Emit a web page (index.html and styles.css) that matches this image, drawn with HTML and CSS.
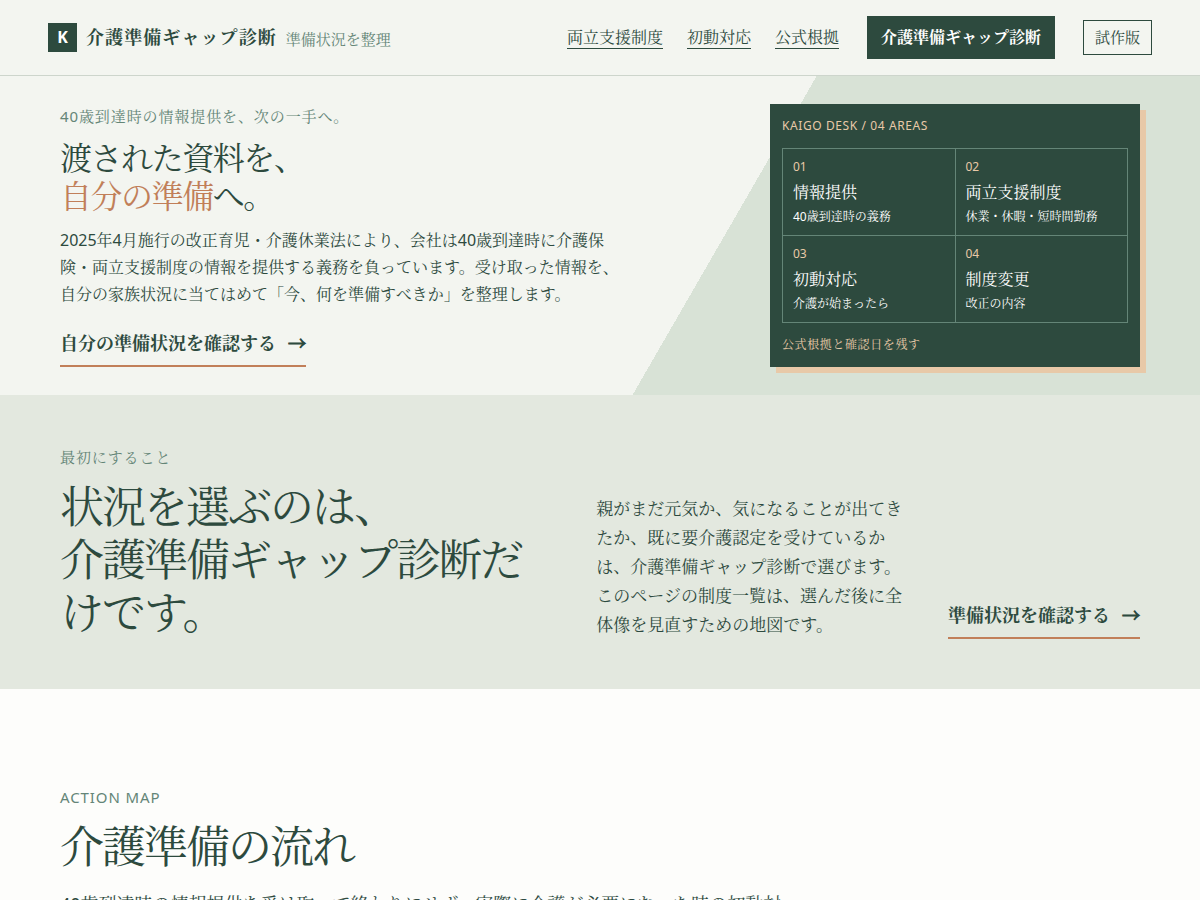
FILE: index.html
```
<!DOCTYPE html>
<html lang="ja">
<head>
    <meta charset="UTF-8">
    <meta name="viewport" content="width=device-width, initial-scale=1">
    <title>介護準備ギャップ診断</title>
    <link rel="stylesheet" href="styles.css">
</head>
<body>
    <header class="site-header">
        <div class="brand">
            <span class="brand-mark">K</span>
            <strong>介護準備ギャップ診断</strong>
            <small>準備状況を整理</small>
        </div>
        <nav class="site-nav">
            <div class="nav-links">
                <a href="#areas">両立支援制度</a>
                <a href="#start">初動対応</a>
                <a href="#map">公式根拠</a>
            </div>
            <a class="nav-cta" href="#start">介護準備ギャップ診断</a>
            <span class="badge">試作版</span>
        </nav>
    </header>

    <main>
        <section class="hero">
            <div class="hero-copy">
                <p class="eyebrow">40歳到達時の情報提供を、次の一手へ。</p>
                <h1>渡された資料を、<br><em>自分の準備</em>へ。</h1>
                <p class="lead">2025年4月施行の改正育児・介護休業法により、会社は40歳到達時に介護保険・両立支援制度の情報を提供する義務を負っています。受け取った情報を、自分の家族状況に当てはめて「今、何を準備すべきか」を整理します。</p>
                <a class="text-cta" href="#start">自分の準備状況を確認する<span>→</span></a>
            </div>

            <aside class="desk" id="areas">
                <p class="desk-label">KAIGO DESK / 04 AREAS</p>
                <div class="desk-grid">
                    <div class="desk-cell">
                        <span>01</span>
                        <b>情報提供</b>
                        <small>40歳到達時の義務</small>
                    </div>
                    <div class="desk-cell">
                        <span>02</span>
                        <b>両立支援制度</b>
                        <small>休業・休暇・短時間勤務</small>
                    </div>
                    <div class="desk-cell">
                        <span>03</span>
                        <b>初動対応</b>
                        <small>介護が始まったら</small>
                    </div>
                    <div class="desk-cell">
                        <span>04</span>
                        <b>制度変更</b>
                        <small>改正の内容</small>
                    </div>
                </div>
                <p class="desk-label">公式根拠と確認日を残す</p>
            </aside>
        </section>

        <section class="start" id="start">
            <div>
                <p class="eyebrow">最初にすること</p>
                <h2>状況を選ぶのは、<br>介護準備ギャップ診断だけです。</h2>
            </div>
            <p class="start-text">親がまだ元気か、気になることが出てきたか、既に要介護認定を受けているかは、介護準備ギャップ診断で選びます。このページの制度一覧は、選んだ後に全体像を見直すための地図です。</p>
            <a class="text-cta" href="#map">準備状況を確認する<span>→</span></a>
        </section>

        <section class="map" id="map">
            <p class="eyebrow">ACTION MAP</p>
            <h2>介護準備の流れ</h2>
            <p class="map-text">40歳到達時の情報提供を受け取って終わりにせず、実際に介護が必要になった時の初動対応</p>
        </section>
    </main>
</body>
</html>
```
FILE: styles.css
```
:root {
    --green: #2d4a3e;
    --sage: #648577;
    --pale: #f3f5f0;
    --mist: #e3e8df;
    --leaf: #d8e2d6;
    --clay: #c17f59;
    --peach: #e8c9a8;
}

* {
    box-sizing: border-box;
}

body {
    margin: 0;
    background-color: #fdfdfb;
    color: var(--green);
    font-family: "Noto Sans", "Noto Serif CJK JP", serif;
    font-size: 16px;
    line-height: 27px;
}

h1, h2, p {
    margin: 0;
}

h1, h2 {
    font-weight: 400;
    letter-spacing: -0.045em;
}

h1 {
    margin: 10px 0 12px;
    font-size: 32px;
    line-height: 38px;
}

h1 em {
    color: var(--clay);
    font-style: normal;
}

h2 {
    margin-top: 10px;
    font-size: 44px;
    line-height: 53px;
}

a {
    color: inherit;
    text-decoration: none;
}

/* header */
.site-header {
    display: flex;
    justify-content: space-between;
    align-items: center;
    padding: 16px 48px;
    background-color: var(--pale);
    border-bottom: 1px solid #cdd5cc;
}

.brand {
    display: flex;
    align-items: center;
    gap: 9px;
}

.brand-mark {
    width: 29px;
    background-color: var(--green);
    color: white;
    font-weight: 700;
    line-height: 29px;
    text-align: center;
}

.brand strong {
    font-size: 18px;
    letter-spacing: 0.06em;
}

.brand small {
    padding-top: 3px;
    color: var(--sage);
    font-size: 15px;
}

.site-nav {
    display: flex;
    align-items: center;
    gap: 28px;
}

.nav-links {
    display: flex;
    gap: 24px;
}

.nav-links a {
    border-bottom: 1px solid var(--green);
    line-height: 22px;
}

.nav-cta {
    padding: 8px 14px;
    background-color: var(--green);
    color: white;
    font-weight: 700;
}

.badge {
    padding: 3px 11px;
    border: 1px solid var(--green);
    font-size: 15px;
}

/* shared text */
.eyebrow {
    color: var(--sage);
    font-size: 15px;
    line-height: 25px;
    letter-spacing: 0.06em;
}

.text-cta {
    display: inline-flex;
    gap: 12px;
    padding-bottom: 6px;
    border-bottom: 2px solid var(--clay);
    font-size: 18px;
    font-weight: 700;
    line-height: 31px;
}

.text-cta span {
    -webkit-text-stroke: 1px var(--green);
}

/* hero */
.hero {
    display: flex;
    justify-content: space-between;
    align-items: center;
    gap: 60px;
    padding: 28px 60px;
    background: linear-gradient(120deg, var(--pale) 59%, var(--leaf) 59%);
}

.lead {
    max-width: 560px;
    margin-bottom: 20px;
}

.desk {
    width: 370px;
    padding: 12px;
    background-color: var(--green);
    box-shadow: 6px 6px 0 var(--peach);
    color: white;
}

.desk-label {
    color: var(--peach);
    font-size: 12px;
    line-height: 20px;
    letter-spacing: 0.05em;
}

.desk-grid {
    display: grid;
    grid-template-columns: 1fr 1fr;
    margin: 12px 0;
    border-top: 1px solid var(--sage);
    border-left: 1px solid var(--sage);
}

.desk-cell {
    display: flex;
    flex-direction: column;
    padding: 8px 10px;
    border-right: 1px solid var(--sage);
    border-bottom: 1px solid var(--sage);
}

.desk-cell span {
    color: var(--peach);
    font-size: 12px;
    line-height: 20px;
}

.desk-cell b {
    font-weight: 400;
    line-height: 30px;
}

.desk-cell small {
    font-size: 12px;
    line-height: 20px;
}

/* first step */
.start {
    display: grid;
    grid-template-columns: 1.6fr 1fr auto;
    align-items: end;
    gap: 44px;
    padding: 50px 60px;
    background-color: var(--mist);
}

.start-text {
    font-size: 17px;
    line-height: 29px;
}

/* action map */
.map {
    padding: 96px 60px;
}

.map-text {
    max-width: 730px;
    margin-top: 16px;
    font-size: 18px;
    line-height: 31px;
}
```
